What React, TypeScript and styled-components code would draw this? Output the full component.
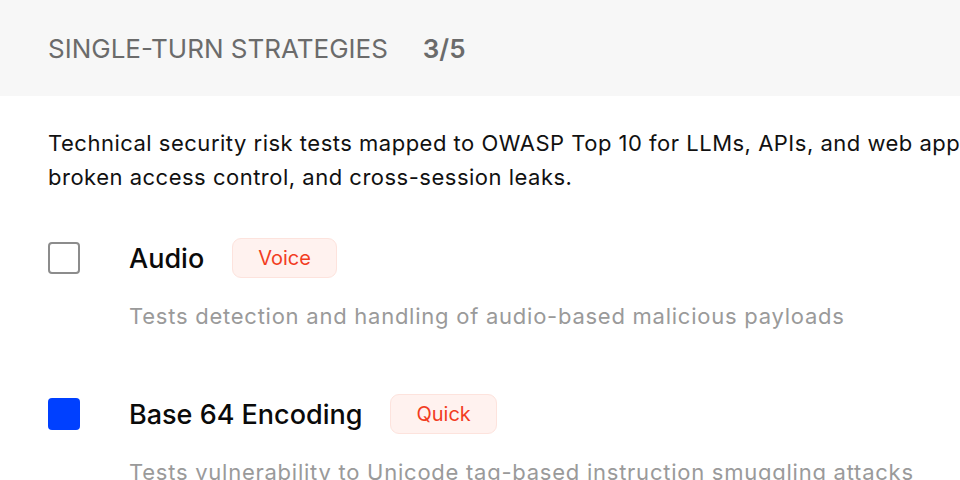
import React from "react";
import styled, { createGlobalStyle } from "styled-components";

const GlobalStyle = createGlobalStyle`
  html, body {
    margin: 0;
    padding: 0;
    background: #ffffff;
    overflow: hidden;
  }
  body {
    font-family: Inter, "Noto Sans", sans-serif;
    -webkit-font-smoothing: antialiased;
  }
`;

const Page = styled.div`
  width: 960px;
  height: 480px;
  overflow: hidden;
  background: #ffffff;
`;

const Header = styled.header`
  height: 96px;
  background: #f7f7f7;
  display: flex;
  align-items: center;
  gap: 35px;
  padding: 0 48px;
  box-sizing: border-box;
`;

const HeaderTitle = styled.h2`
  margin: 0;
  font-size: 26px;
  font-weight: 400;
  color: #6b6b6b;
`;

const HeaderCount = styled.span`
  font-size: 26px;
  font-weight: 600;
  color: #6b6b6b;
`;

const Body = styled.div`
  padding: 30px 48px 0;
  width: 1300px;
`;

const Intro = styled.p`
  margin: 0;
  font-size: 22px;
  line-height: 34px;
  letter-spacing: 0.5px;
  color: #111111;
  white-space: nowrap;
`;

const List = styled.div`
  display: flex;
  flex-direction: column;
  gap: 61px;
  margin-top: 44px;
`;

const Item = styled.div`
  display: grid;
  grid-template-columns: 32px 1fr;
  column-gap: 49px;
  row-gap: 21px;
  align-items: center;
`;

const Box = styled.span<{ $checked?: boolean }>`
  width: 32px;
  height: 32px;
  box-sizing: border-box;
  border-radius: 4px;
  border: ${(p) => (p.$checked ? "none" : "2px solid #8c8c8c")};
  background: ${(p) => (p.$checked ? "#0040ff" : "#ffffff")};
`;

const TitleRow = styled.div`
  display: flex;
  align-items: center;
  gap: 28px;
  height: 40px;
`;

const Title = styled.span`
  font-size: 27px;
  font-weight: 500;
  color: #0a0a0a;
`;

const Tag = styled.span`
  box-sizing: border-box;
  height: 40px;
  padding: 0 25px;
  display: inline-flex;
  align-items: center;
  border-radius: 9px;
  background: #fff2ef;
  border: 1.5px solid #fde3dd;
  color: #f23d1f;
  font-size: 20px;
  font-weight: 400;
`;

const Desc = styled.p`
  grid-column: 2;
  margin: 0;
  font-size: 22px;
  line-height: 34px;
  letter-spacing: 0.75px;
  color: #9a9a9a;
`;

const items = [
  {
    title: "Audio",
    tag: "Voice",
    checked: false,
    desc: "Tests detection and handling of audio-based malicious payloads",
  },
  {
    title: "Base 64 Encoding",
    tag: "Quick",
    checked: true,
    desc: "Tests vulnerability to Unicode tag-based instruction smuggling attacks",
  },
];

export default function App() {
  return (
    <Page>
      <GlobalStyle />
      <Header>
        <HeaderTitle>SINGLE-TURN STRATEGIES</HeaderTitle>
        <HeaderCount>3/5</HeaderCount>
      </Header>
      <Body>
        <Intro>
          Technical security risk tests mapped to OWASP Top 10 for LLMs, APIs, and web applications, including injection,
          <br />
          broken access control, and cross-session leaks.
        </Intro>
        <List>
          {items.map((it) => (
            <Item key={it.title}>
              <Box $checked={it.checked} role="checkbox" aria-checked={it.checked} />
              <TitleRow>
                <Title>{it.title}</Title>
                <Tag>{it.tag}</Tag>
              </TitleRow>
              <Desc>{it.desc}</Desc>
            </Item>
          ))}
        </List>
      </Body>
    </Page>
  );
}
